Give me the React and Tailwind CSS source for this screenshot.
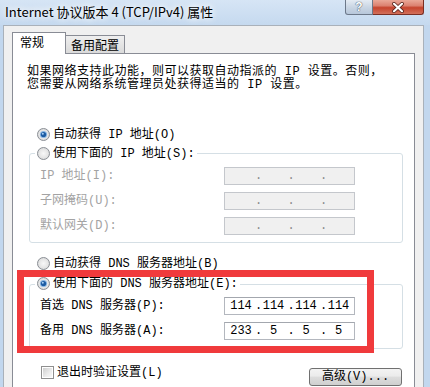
import React from 'react';

const mono = "font-['Liberation_Mono','Noto_Sans_CJK_SC',monospace]";
const sans = "font-['Noto_Sans_CJK_SC','Noto_Sans',sans-serif]";

function Radio({ checked, id }) {
    return (
        <svg width="13" height="13" viewBox="0 0 13 13" className="shrink-0">
            <defs>
                <radialGradient id={id} cx="50%" cy="50%" r="55%">
                    <stop offset="0%" stopColor="#f8f8f8" />
                    <stop offset="70%" stopColor="#e4e4e4" />
                    <stop offset="100%" stopColor="#cfd1d3" />
                </radialGradient>
            </defs>
            <circle cx="6.5" cy="6.5" r="6" fill={`url(#${id})`} stroke="#8c9096" strokeWidth="1" />
            {checked && (
                <>
                    <circle cx="6.5" cy="6.5" r="3.6" fill="#86b4e2" />
                    <circle cx="6.5" cy="6.5" r="2.6" fill="#1d5ca3" />
                    <circle cx="5.8" cy="5.7" r="1" fill="#a9d0f4" />
                </>
            )}
        </svg>
    );
}

function IpBox({ values, disabled }) {
    const parts = values || ['', '', '', ''];
    return (
        <div
            className={`flex h-[18px] w-[131px] items-center border pl-[2px] leading-[16px] ${
                disabled
                    ? 'border-[#c4c7cc] bg-[#f0f0f0] text-[#8c8c8c]'
                    : 'border-[#b3b7be] border-t-[#a3a7ae] bg-white text-black'
            }`}
        >
            {parts.map((p, i) => (
                <React.Fragment key={i}>
                    <span className="w-[28px] shrink-0 text-center">{p}</span>
                    {i < 3 && <span className="w-[4.5px] shrink-0 whitespace-nowrap">.</span>}
                </React.Fragment>
            ))}
        </div>
    );
}

function FieldRow({ label, values, disabled }) {
    return (
        <div className="flex h-[18px] items-center">
            <span className={`w-[184px] shrink-0 whitespace-nowrap ${disabled ? 'text-[#a3a3a3]' : 'text-black'}`}>{label}</span>
            <IpBox values={values} disabled={disabled} />
        </div>
    );
}

function RadioRow({ checked, id, label, className = '' }) {
    return (
        <div className={`flex h-[19px] items-center gap-[3px] ${className}`}>
            <Radio checked={checked} id={id} />
            <span className="whitespace-nowrap">{label}</span>
        </div>
    );
}

export default function App() {
    return (
        <div className="flex h-[387px] w-[430px] flex-col overflow-hidden bg-[#c2d7ee]">
            {/* title bar */}
            <div className="flex h-[25px] shrink-0 items-start justify-between bg-[linear-gradient(#d6e5f5,#c5d9ef)]">
                <div className={`${sans} pl-[5px] pt-[3px] text-[13px] leading-[17px] text-black [text-shadow:0_0_6px_#fff,0_0_8px_#fff]`}>
                    Internet 协议版本 4 (TCP/IPv4) 属性
                </div>
                <div className="mr-[6px] flex">
                    <div className="flex h-[15px] w-[28px] items-center justify-center rounded-bl-[3px] border border-t-0 border-[#6c7889] bg-[linear-gradient(#e4ebf3,#cad6e4_50%,#b7c7da)]">
                        <span className="font-['Liberation_Sans',sans-serif] text-[12px] font-bold leading-[13px] text-white [text-shadow:0_0_1px_#3d4a5c,0_0_1px_#3d4a5c]">?</span>
                    </div>
                    <div className="flex h-[15px] w-[51px] items-center justify-center rounded-br-[3px] border border-l-0 border-t-0 border-[#7a2f24] bg-[linear-gradient(#eaa898_0%,#dc8271_40%,#c6442e_55%,#d2705a_100%)]">
                        <svg width="14" height="11" viewBox="0 0 14 11">
                            <path d="M3 1.8 L11 9.2 M11 1.8 L3 9.2" stroke="#5b2820" strokeWidth="3.8" strokeLinecap="round" />
                            <path d="M3 1.8 L11 9.2 M11 1.8 L3 9.2" stroke="#ffffff" strokeWidth="2.2" strokeLinecap="round" />
                        </svg>
                    </div>
                </div>
            </div>

            {/* client area */}
            <div className="ml-[3px] mr-[6px] flex min-h-0 flex-1 flex-col border border-b-0 border-[#a9b1ba] bg-[#f0f0f0] pl-[8px] pt-[6px]">
                {/* tabs */}
                <div className={`${sans} flex h-[21px] shrink-0 items-end text-[12px] text-black`}>
                    <div className="relative z-10 h-[22px] w-[54px] self-start border border-b-0 border-[#898c95] bg-white pl-[7px] pt-[1px] leading-[16px]">
                        常规
                    </div>
                    <div className="h-[18px] w-[59px] border-r border-t border-[#898c95] bg-[linear-gradient(#efefef,#dadada)] pl-[5px] pt-[1px] leading-[16px]">
                        备用配置
                    </div>
                </div>

                {/* tab panel */}
                <div className={`${mono} relative w-[403px] border border-[#898c95] bg-white pb-[20px] text-[12px] text-black`}>
                    <p className="pl-[14px] pt-[12px] leading-[13px] tracking-[0.5px]">
                        如果网络支持此功能，则可以获取自动指派的 IP 设置。否则，
                        <br />
                        您需要从网络系统管理员处获得适当的 IP 设置。
                    </p>

                    <RadioRow checked id="r1" label="自动获得 IP 地址(O)" className="mt-[33px] pl-[24px]" />

                    <div className="ml-[16px] mt-[9px] w-[374px] rounded-[3px] border border-[#d5dfe5] pb-[7px]">
                        <div className="-mt-[10px] ml-[5px] flex h-[19px] w-fit items-center gap-[3px] bg-white pl-[2px] pr-[2px]">
                            <Radio id="r2" />
                            <span className="whitespace-nowrap">使用下面的 IP 地址(S):</span>
                        </div>
                        <div className="mt-[4px] flex flex-col gap-[7px] pl-[10px]">
                            <FieldRow label="IP 地址(I):" disabled />
                            <FieldRow label="子网掩码(U):" disabled />
                            <FieldRow label="默认网关(D):" disabled />
                        </div>
                    </div>

                    <RadioRow id="r3" label="自动获得 DNS 服务器地址(B)" className="mt-[11px] pl-[24px]" />

                    <div className="ml-[16px] mt-[11px] w-[374px] rounded-[3px] border border-[#d5dfe5] pb-[8px]">
                        <div className="-mt-[11px] ml-[5px] flex h-[19px] w-fit items-center gap-[3px] bg-white pl-[2px] pr-[2px]">
                            <Radio checked id="r4" />
                            <span className="whitespace-nowrap">使用下面的 DNS 服务器地址(E):</span>
                        </div>
                        <div className="mt-[4px] flex flex-col gap-[7px] pl-[10px]">
                            <FieldRow label="首选 DNS 服务器(P):" values={['114', '114', '114', '114']} />
                            <FieldRow label="备用 DNS 服务器(A):" values={['233', '5', '5', '5']} />
                        </div>
                    </div>

                    <div className="mt-[14px] flex items-start justify-between pl-[28px] pr-[12px]">
                        <div className="flex h-[19px] items-center gap-[3px]">
                            <div className="h-[13px] w-[13px] border border-[#8f8f8f] bg-white p-[1px]">
                                <div className="h-full w-full bg-[linear-gradient(135deg,#cfcfcf,#ececec_60%,#f8f8f8)]" />
                            </div>
                            <span className="whitespace-nowrap">退出时验证设置(L)</span>
                        </div>
                        <button className="mt-[5px] flex h-[18px] w-[93px] items-center justify-center rounded-[3px] border border-[#707070] bg-[linear-gradient(#f3f3f3_0%,#ebebeb_45%,#dddddd_50%,#cfcfcf_100%)] leading-[16px] text-black">
                            高级(V)...
                        </button>
                    </div>

                    {/* red annotation frame */}
                    <div className="absolute left-[4px] top-[216px] h-[83px] w-[357px] border-[7px] border-[#f03a3c]" />
                </div>
            </div>
        </div>
    );
}
